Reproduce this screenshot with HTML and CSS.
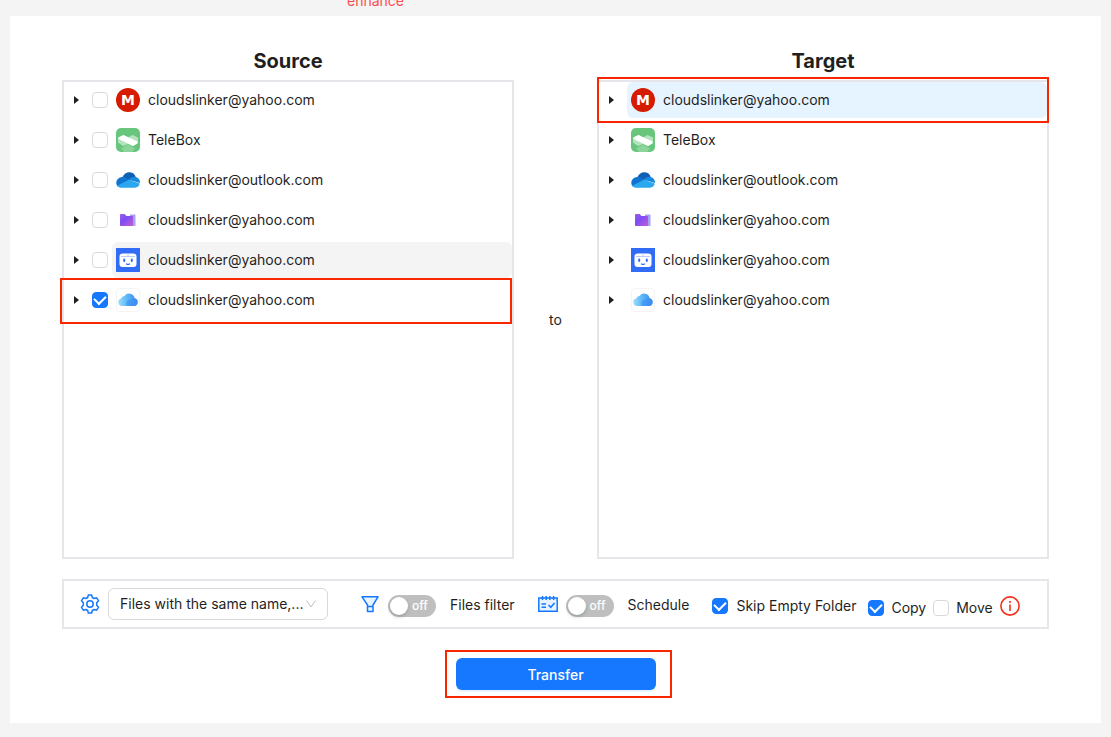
FILE: index.html
```
<!DOCTYPE html>
<html lang="en">
<head>
  <meta charset="UTF-8">
  <meta name="viewport" content="width=device-width, initial-scale=1">
  <title>Transfer</title>
  <link rel="stylesheet" href="styles.css">
</head>
<body>
  <!-- shared icons -->
  <svg class="sprite" width="0" height="0" aria-hidden="true">
    <defs>
      <linearGradient id="gFolder" x1="0" y1="0" x2="1" y2="1">
        <stop offset="0" stop-color="#a05fdc"/>
        <stop offset="0.4" stop-color="#7d4cf7"/>
        <stop offset="1" stop-color="#c45fd0"/>
      </linearGradient>
      <linearGradient id="gCloud" x1="0" y1="0" x2="1" y2="0">
        <stop offset="0" stop-color="#9fdcfb"/>
        <stop offset="0.45" stop-color="#5cb8f5"/>
        <stop offset="1" stop-color="#3b87f2"/>
      </linearGradient>
    </defs>
    <symbol id="telebox" viewBox="0 0 24 24">
      <rect width="24" height="24" rx="5" fill="#67c67c"/>
      <path d="M2 9.500 7.500 7 12 9.500 16.500 7 22 9.500V15l-5.500 3-4.500-2-5 2L2 14.500z" fill="#b5e3bf"/>
      <path d="M2.500 9.500 7.500 7 21.500 13.500v2L17 18 2.500 11z" fill="#fff"/>
      <path d="M12 16.500 19 20.500 16 24H8l-3-3.500z" fill="#8dd49c"/>
    </symbol>
    <symbol id="onedrive" viewBox="0 0 24 24">
      <path d="M6.500 9C8 5.500 11 4 14 4.300c3 .4 5 2.200 5.700 4.700L14 13z" fill="#0f5fb4"/>
      <path d="M1 17.500C-1 14 1.500 9.300 6.300 9c2-.2 3.700.6 7.700 3L5 19.200c-1.700 0-3.200-.5-4-1.700z" fill="#0e74d0"/>
      <path d="M12 11.500l3.500-2.200c1.300-.6 2.800-.7 4.200-.3 3 .6 4.600 3.300 4.200 6z" fill="#1688dd"/>
      <path d="M1.200 17.700 13 11.800l10.700 3.800c-.3 2.200-2.200 4.100-4.700 4.200H5.500c-1.800 0-3.400-.8-4.300-2.100z" fill="#2ba7f0"/>
    </symbol>
    <symbol id="folder" viewBox="0 0 24 24">
      <path d="M14 6.500h4.500c.6 0 1 .4 1 1V17c0 .6-.4 1-1 1H13z" fill="#a5a2f5"/>
      <path d="M4 7c0-.6.400-1 1-1h3.500l2 2H16c.6 0 1 .4 1 1v9H5c-.6 0-1-.4-1-1z" fill="url(#gFolder)"/>
    </symbol>
    <symbol id="bot" viewBox="0 0 24 24">
      <rect width="24" height="24" fill="#306cf6"/>
      <rect x="3.500" y="5.500" width="17" height="13.500" rx="3" fill="#fff"/>
      <path d="M5 8.500h14M12 5.500v3" stroke="#b8cdfc" stroke-width="1" fill="none"/>
      <path d="M8.200 11.500v1.500M15.800 11.500v1.500" stroke="#306cf6" stroke-width="2" stroke-linecap="round" fill="none"/>
      <path d="M10.500 16c.8.5 2.200.5 3 0" stroke="#306cf6" stroke-width="1.200" stroke-linecap="round" fill="none"/>
    </symbol>
    <symbol id="icloud" viewBox="0 0 24 24">
      <rect x=".5" y=".5" width="23" height="23" rx="3" fill="#fff" stroke="#f4f4f5"/>
      <path d="M6 18a3.800 3.800 0 0 1-.8-7.500A3.200 3.200 0 0 1 8.500 8 5.600 5.600 0 0 1 18.600 10.300 3.900 3.900 0 0 1 18 18z" fill="url(#gCloud)"/>
      <path d="M11 18c-2-3 .5-6.500 3.500-6.200 2-2 4-1.800 4.100-1.500A3.900 3.900 0 0 1 18 18z" fill="#3c90f3" opacity=".6"/>
    </symbol>
  </svg>

  <header class="topbar">
    <span class="notice">enhance</span>
  </header>

  <main class="card">
    <div class="columns">
      <section class="column">
        <h2 class="title">Source</h2>
        <ul class="tree">
          <li class="node">
            <span class="caret"></span>
            <input class="check" type="checkbox" id="s1">
            <label class="account" for="s1"><svg class="logo" viewBox="0 0 24 24"><circle cx="12" cy="12" r="12" fill="#d51c00"/><text class="logo-m" x="12" y="17">M</text></svg>cloudslinker@yahoo.com</label>
          </li>
          <li class="node">
            <span class="caret"></span>
            <input class="check" type="checkbox" id="s2">
            <label class="account" for="s2"><svg class="logo"><use href="#telebox"/></svg>TeleBox</label>
          </li>
          <li class="node">
            <span class="caret"></span>
            <input class="check" type="checkbox" id="s3">
            <label class="account" for="s3"><svg class="logo"><use href="#onedrive"/></svg>cloudslinker@outlook.com</label>
          </li>
          <li class="node">
            <span class="caret"></span>
            <input class="check" type="checkbox" id="s4">
            <label class="account" for="s4"><svg class="logo"><use href="#folder"/></svg>cloudslinker@yahoo.com</label>
          </li>
          <li class="node">
            <span class="caret"></span>
            <input class="check" type="checkbox" id="s5">
            <label class="account hovered" for="s5"><svg class="logo"><use href="#bot"/></svg>cloudslinker@yahoo.com</label>
          </li>
          <li class="node">
            <span class="caret"></span>
            <input class="check" type="checkbox" id="s6" checked>
            <label class="account" for="s6"><svg class="logo"><use href="#icloud"/></svg>cloudslinker@yahoo.com</label>
            <span class="mark mark-source"></span>
          </li>
        </ul>
      </section>

      <div class="between">to</div>

      <section class="column">
        <h2 class="title">Target</h2>
        <ul class="tree">
          <li class="node">
            <span class="caret"></span>
            <span class="account selected"><svg class="logo" viewBox="0 0 24 24"><circle cx="12" cy="12" r="12" fill="#d51c00"/><text class="logo-m" x="12" y="17">M</text></svg>cloudslinker@yahoo.com</span>
            <span class="mark mark-target"></span>
          </li>
          <li class="node">
            <span class="caret"></span>
            <span class="account"><svg class="logo"><use href="#telebox"/></svg>TeleBox</span>
          </li>
          <li class="node">
            <span class="caret"></span>
            <span class="account"><svg class="logo"><use href="#onedrive"/></svg>cloudslinker@outlook.com</span>
          </li>
          <li class="node">
            <span class="caret"></span>
            <span class="account"><svg class="logo"><use href="#folder"/></svg>cloudslinker@yahoo.com</span>
          </li>
          <li class="node">
            <span class="caret"></span>
            <span class="account"><svg class="logo"><use href="#bot"/></svg>cloudslinker@yahoo.com</span>
          </li>
          <li class="node">
            <span class="caret"></span>
            <span class="account"><svg class="logo"><use href="#icloud"/></svg>cloudslinker@yahoo.com</span>
          </li>
        </ul>
      </section>
    </div>

    <div class="options">
      <div class="option option-rule">
        <svg class="icon" viewBox="0 0 20 20" fill="none" stroke="#1677ff" stroke-width="1.500" stroke-linejoin="round">
          <path d="M8.300 1h3.400l.6 2.500 1.800 1 2.500-.7 1.900 2.900L16.700 8.700v2.600l1.800 2-1.900 2.900-2.500-.7-1.800 1-.6 2.500H8.300l-.6-2.500-1.800-1-2.500.7-1.900-2.900 1.800-2V8.700l-1.800-2 1.900-2.900 2.500.7 1.800-1z"/>
          <circle cx="10" cy="10" r="3.200"/>
        </svg>
        <span class="select-wrap">
          <select class="select" aria-label="Same name rule">
            <option>Files with the same name,...</option>
          </select>
          <svg class="arrow" viewBox="0 0 12 12" fill="none" stroke="#bfbfbf"><path d="M1.500 2.500 6 9l4.500-6.500"/></svg>
        </span>
      </div>

      <div class="option option-filter">
        <svg class="icon" viewBox="0 0 20 20" fill="#e6f4ff" stroke="#1677ff" stroke-width="1.500" stroke-linejoin="round">
          <path d="M2 2.800h16L13 11v6.500H7.500V11z"/>
          <path d="M7.500 12.500H13"/>
        </svg>
        <button class="switch" type="button" role="switch" aria-checked="false" id="filter"><span class="knob"></span>off</button>
        <label class="switch-label" for="filter">Files filter</label>
      </div>

      <div class="option option-schedule">
        <svg class="icon" viewBox="0 0 20 20" fill="none" stroke="#1677ff" stroke-width="1.500">
          <path d="M.800 4h18.400v13.200H.800z" fill="#e6f4ff"/>
          <path d="M4.500 2v4M8.200 2v4M11.900 2v4M15.600 2v4M3.500 10h4.500M3.500 13.200h4.500M10.500 11l2.300 2.300L16.500 9"/>
        </svg>
        <button class="switch" type="button" role="switch" aria-checked="false" id="schedule"><span class="knob"></span>off</button>
        <label class="switch-label" for="schedule">Schedule</label>
      </div>

      <div class="option option-skip">
        <input class="check" type="checkbox" id="skip" checked>
        <label class="check-label" for="skip">Skip Empty Folder</label>
      </div>

      <div class="option option-mode">
        <input class="check" type="checkbox" id="copy" checked>
        <label class="check-label" for="copy">Copy</label>
        <input class="check" type="checkbox" id="move">
        <label class="check-label" for="move">Move</label>
        <svg class="icon" viewBox="0 0 20 20" fill="none" stroke="#f5301c" stroke-width="1.600">
          <circle cx="10" cy="10" r="9.100"/>
          <path d="M10 8.500V15M10 5v2"/>
        </svg>
      </div>
    </div>

    <div class="actions">
      <div class="action">
        <button class="transfer" type="button">Transfer</button>
        <span class="mark mark-transfer"></span>
      </div>
    </div>
  </main>
</body>
</html>
```
FILE: styles.css
```
* {
  box-sizing: border-box;
}
body {
  margin: 0;
  background: #f4f4f4;
  color: #1f1f1f;
  font-family: Inter, "Liberation Sans", sans-serif;
  font-size: 14px;
  line-height: 22px;
}
button, select {
  font: inherit;
}
.sprite {
  position: absolute;
}

/* header */
.topbar {
  display: flex;
  align-items: flex-end;
  height: 16px;
  padding: 0 347px 4px;
}
.notice {
  color: #ff4d4f;
}

.card {
  margin: 0 10px 14px;
  padding: 28px 52px 33px;
  background: #fff;
}

/* trees */
.columns {
  display: flex;
}
.column {
  flex: 1;
}
.title {
  margin: 0 0 2px;
  font-size: 20px;
  font-weight: 700;
  line-height: 34px;
  text-align: center;
}
.between {
  display: flex;
  align-items: center;
  justify-content: center;
  width: 83px;
  padding-top: 36px;
}
.tree {
  min-height: 479px;
  margin: 0;
  padding: 0;
  border: 2px solid #e5e5ea;
  list-style: none;
}
.node {
  position: relative;
  display: flex;
  align-items: center;
  gap: 4px;
  margin-bottom: 4px;
}
.caret {
  display: flex;
  justify-content: center;
  width: 24px;
}
.caret::before {
  content: "";
  border: 4px solid transparent;
  border-left: 5px solid #1f1f1f;
  border-right: 0;
}
.account {
  display: flex;
  flex: 1;
  align-items: center;
  gap: 8px;
  height: 36px;
  padding: 0 4px;
  border-radius: 6px;
}
.hovered {
  background: #f4f4f4;
}
.selected {
  background: #e6f4ff;
}
.logo {
  width: 24px;
  height: 24px;
}
.logo-m {
  fill: #fff;
  font-family: "DejaVu Sans", sans-serif;
  font-size: 14px;
  font-weight: 700;
  text-anchor: middle;
}

.check {
  flex: none;
  width: 16px;
  height: 16px;
  margin: 0;
  border: 1px solid #d9d9d9;
  border-radius: 4px;
  background: #fff;
  appearance: none;
}
.check:checked {
  display: grid;
  place-items: center;
  border-color: #1677ff;
  background: #1677ff;
}
.check:checked::before {
  content: "";
  width: 6px;
  height: 9px;
  margin-bottom: 3px;
  border: solid #fff;
  border-width: 0 2px 2px 0;
  transform: rotate(45deg);
}

/* red frames */
.mark {
  position: absolute;
  border: 2px solid #fa2600;
  pointer-events: none;
}
.mark-source {
  inset: -4px 0 -6px -4px;
}
.mark-target {
  inset: -5px -2px;
}
.mark-transfer {
  inset: -8px -16px -8px -11px;
}

/* options bar */
.options {
  display: flex;
  align-items: center;
  height: 50px;
  margin-top: 20px;
  padding: 0 16px;
  border: 2px solid #e5e5ea;
}
.option {
  display: flex;
  align-items: center;
  gap: 8px;
  white-space: nowrap;
}
.icon {
  flex: none;
  width: 20px;
  height: 20px;
}
.select-wrap {
  position: relative;
  display: flex;
}
.select {
  width: 220px;
  height: 32px;
  padding: 0 20px 0 11px;
  border: 1px solid #d9d9d9;
  border-radius: 6px;
  background: #fff;
  color: inherit;
  appearance: none;
}
.arrow {
  position: absolute;
  top: 10px;
  right: 11px;
  width: 12px;
  height: 12px;
  pointer-events: none;
}
.option-filter {
  margin-left: 32px;
}
.option-schedule {
  margin-left: 23px;
}
.option-skip {
  margin-left: 23px;
  padding-top: 4px;
}
.option-mode {
  gap: 7px;
  margin-left: 12px;
  padding-top: 8px;
}
.option-mode .icon {
  margin-bottom: 4px;
}
.switch {
  display: flex;
  align-items: center;
  gap: 4px;
  width: 48px;
  height: 22px;
  margin-top: 4px;
  padding: 0 2px;
  border: 0;
  border-radius: 11px;
  background: #bfbfbf;
  color: #fff;
  font-size: 12px;
  font-weight: 500;
}
.knob {
  width: 18px;
  height: 18px;
  border-radius: 9px;
  background: #fff;
  box-shadow: 0 2px 4px rgba(0, 35, 11, 0.2);
}
.switch-label {
  margin: 2px 0 0 6px;
}

/* transfer button */
.actions {
  display: flex;
  justify-content: center;
  margin-top: 29px;
}
.action {
  position: relative;
}
.transfer {
  display: block;
  width: 200px;
  height: 32px;
  padding: 2px 0 0;
  border: 0;
  border-radius: 6px;
  background: #1677ff;
  box-shadow: 0 2px 0 rgba(5, 145, 255, 0.1);
  color: #fff;
  font-weight: 500;
}
```
